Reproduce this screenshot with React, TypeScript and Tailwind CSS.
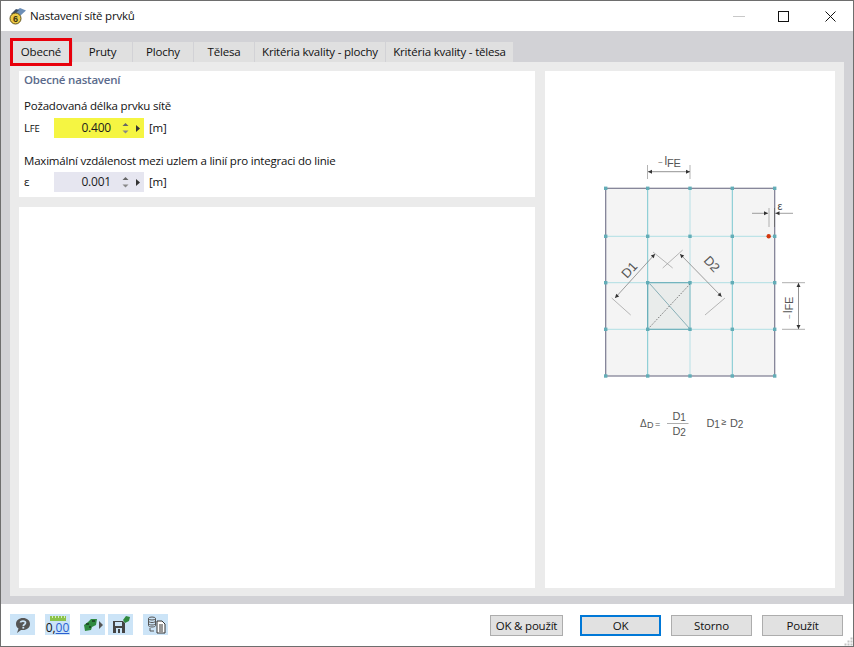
const font = { fontFamily: '"Open Sans", "Noto Sans", sans-serif' };

const tabs = [
  { label: "Pruty", w: "w-[60px]" },
  { label: "Plochy", w: "w-[61px]" },
  { label: "Tělesa", w: "w-[61px]" },
  { label: "Kritéria kvality - plochy", w: "w-[131px]" },
  { label: "Kritéria kvality - tělesa", w: "w-[128px]" },
];

const gridX = [605.7, 647.7, 690, 732.3, 774.7];
const gridY = [188.3, 236.3, 282.7, 329.3, 376];

const Arrow = ({ x, y, rot }: { x: number; y: number; rot: number }) => (
  <path d="M0 0 L-4 -2 L-4 2 Z" fill="#333" transform={`translate(${x} ${y}) rotate(${rot})`} />
);

const Diagram = () => (
  <svg viewBox="545 71 290 517" className="w-[290px] h-[517px] block">
    <rect x={605.7} y={188.3} width={169} height={187.7} fill="#f4f4f4" />
    <rect x={647.7} y={282.7} width={42.3} height={46.6} fill="#e9eceb" />
    {/* grid */}
    <line x1={647.7} x2={647.7} y1={188} y2={376} stroke="#6cc2cc" strokeWidth={0.9} />
    <line x1={690} x2={690} y1={188} y2={376} stroke="#c9e6ea" strokeWidth={1.4} />
    <line x1={732.3} x2={732.3} y1={188} y2={376} stroke="#6cc2cc" strokeWidth={0.9} />
    <line x1={606} x2={775} y1={236.3} y2={236.3} stroke="#a8dce2" strokeWidth={0.9} />
    <line x1={606} x2={775} y1={282.7} y2={282.7} stroke="#a8dce2" strokeWidth={0.9} />
    <line x1={606} x2={775} y1={329.3} y2={329.3} stroke="#a8dce2" strokeWidth={0.9} />
    {/* highlighted element */}
    <path d="M647.7 282.7 H690 M647.7 329.3 H690 M647.7 282.7 V329.3" stroke="#62a9b5" strokeWidth={1} fill="none" />
    <line x1={690} x2={690} y1={282.7} y2={329.3} stroke="#9cc9cf" strokeWidth={1.4} />
    <line x1={650} y1={284} x2={690} y2={329} stroke="#5f95a0" strokeWidth={0.7} />
    <line x1={648} y1={329} x2={690} y2={284} stroke="#555" strokeWidth={0.8} strokeDasharray="1.5 1.5" />
    <rect x={605.7} y={188.3} width={169} height={187.7} fill="none" stroke="#7a7a90" strokeWidth={1.2} />
    {gridX.map((x) =>
      gridY.map((y) => <rect key={`${x}-${y}`} x={x - 1.7} y={y - 1.7} width={3.4} height={3.4} fill="#63adb7" />)
    )}
    <circle cx={768.7} cy={236.3} r={2.2} fill="#d4380d" />
    {/* l FE dimension, top */}
    <path d="M647.5 165 V179 M690 165 V179" stroke="#aaa" strokeWidth={0.9} />
    <line x1={648} x2={690} y1={171.7} y2={171.7} stroke="#666" strokeWidth={0.7} />
    <Arrow x={648} y={171.7} rot={180} />
    <Arrow x={690} y={171.7} rot={0} />
    <g fill="#555" fontFamily="Liberation Sans">
      <text x={658} y={165} fontSize={8}>~</text>
      <text x={664.5} y={165} fontSize={12}>l</text>
      <text x={667} y={166.5} fontSize={11}>FE</text>
    </g>
    {/* epsilon */}
    <path d="M752 213.3 H768 M775 213.3 H793" stroke="#777" strokeWidth={0.7} />
    <line x1={769} x2={769} y1={208} y2={227} stroke="#bbb" strokeWidth={1.2} />
    <line x1={774.5} x2={774.5} y1={208} y2={227} stroke="#666" strokeWidth={0.8} />
    <Arrow x={768} y={213.3} rot={0} />
    <Arrow x={775.5} y={213.3} rot={180} />
    <text x={777.5} y={210} fontSize={11} fill="#444" fontFamily="Liberation Sans">ε</text>
    {/* l FE dimension, right */}
    <path d="M782 282.7 H805 M782 329.3 H805" stroke="#999" strokeWidth={0.8} />
    <line x1={798.5} x2={798.5} y1={283} y2={329} stroke="#666" strokeWidth={0.7} />
    <Arrow x={798.5} y={283} rot={-90} />
    <Arrow x={798.5} y={329} rot={90} />
    <g fill="#555" fontFamily="Liberation Sans" transform="translate(792.7 319) rotate(-90)">
      <text x={0} y={-1} fontSize={8}>~</text>
      <text x={6} y={-1} fontSize={12}>l</text>
      <text x={8.5} y={0} fontSize={11}>FE</text>
    </g>
    {/* D1 / D2 */}
    <line x1={615} y1={298} x2={655} y2={254} stroke="#777" strokeWidth={0.7} />
    <Arrow x={655} y={254} rot={-47} />
    <Arrow x={615} y={298} rot={133} />
    <line x1={680} y1={254} x2={721.7} y2={296.7} stroke="#777" strokeWidth={0.7} />
    <Arrow x={680} y={254} rot={-134} />
    <Arrow x={721.7} y={296.7} rot={46} />
    <path d="M611.7 298 L630.7 315 M653 252 L672.7 268 M682.7 250 L662.7 268 M725 298 L705 315" stroke="#999" strokeWidth={0.7} fill="none" />
    <text x={0} y={0} fontSize={13} fill="#555" fontFamily="Liberation Sans" transform="translate(627 279) rotate(-47)">D1</text>
    <text x={0} y={0} fontSize={13} fill="#555" fontFamily="Liberation Sans" transform="translate(703 261) rotate(47)">D2</text>
    {/* formula */}
    <g fontFamily="Liberation Sans" fill="#555">
      <text x={640} y={427} fontSize={10}>Δ</text>
      <text x={647} y={428} fontSize={9}>D</text>
      <text x={655} y={427} fontSize={9}>=</text>
      <line x1={667} x2={688.5} y1={423.5} y2={423.5} stroke="#999" strokeWidth={0.8} />
      <text x={672.5} y={420} fontSize={11}>D<tspan fontSize={10} dy={1}>1</tspan></text>
      <text x={672.5} y={435} fontSize={11}>D<tspan fontSize={10} dy={1}>2</tspan></text>
      <text x={706.5} y={427} fontSize={11}>D<tspan fontSize={10} dy={1}>1</tspan></text>
      <text x={721.5} y={425} fontSize={9}>≥</text>
      <text x={730} y={427} fontSize={11}>D<tspan fontSize={10} dy={1}>2</tspan></text>
    </g>
  </svg>
);

const Spinner = () => (
  <svg width="30" height="20" viewBox="0 0 30 20" className="shrink-0">
    <path d="M13.5 5 L10.5 8 H16.5 Z" fill="#666" />
    <path d="M10.5 12.5 H16.5 L13.5 15.5 Z" fill="#888" />
    <path d="M24 7 L28 10.5 L24 14 Z" fill="#333" />
  </svg>
);

const ValueField = ({ value, bg }: { value: string; bg: string }) => (
  <div className={`w-[90px] h-5 flex items-center justify-end pr-[2px] ${bg}`}>
    <span className="text-[12px] text-[#1c1c1c] mr-px leading-none">{value}</span>
    <Spinner />
  </div>
);

const ToolButton = ({ children, className }: { children: React.ReactNode; className?: string }) => (
  <div className={`w-[25px] h-[21px] -mt-[2px] bg-[#cce4f7] flex items-center justify-center ${className ?? ""}`}>{children}</div>
);

const FooterButton = ({ label, className }: { label: string; className: string }) => (
  <div className={`h-[21px] bg-[#e1e1e1] flex items-center justify-center text-[#111] ${className}`}>{label}</div>
);

const AppIcon = () => (
  <svg width="17" height="18" viewBox="0 0 17 18">
    <path d="M5 5 L11 1 L17 3.5 L11 9 Z" fill="#6d8fb8" />
    <path d="M2 7 L7 2 L10 3 L5 8 Z" fill="#3f4f66" />
    <circle cx="6.5" cy="11.5" r="5.5" fill="#ecca45" stroke="#5d5120" strokeWidth="1" />
    <text x="4" y="15" fontSize="9" fontWeight="bold" fill="#3a3310" fontFamily="Liberation Sans">6</text>
  </svg>
);

export default function App() {
  return (
    <div style={font} className="w-[854px] h-[647px] bg-white border border-[#6e6e6e] flex flex-col overflow-hidden text-[11.5px] tracking-[-0.2px] text-[#111]">
      {/* title bar */}
      <div className="h-[30px] shrink-0 flex items-center pl-[8px]">
        <AppIcon />
        <span className="ml-[4px] text-[#111]">Nastavení sítě prvků</span>
        <div className="ml-auto flex items-center">
          <div className="w-[12px] h-px bg-[#c8c8c8] mr-[33px]" />
          <div className="w-[11px] h-[11px] border border-[#111] mr-[36px]" />
          <svg width="11" height="11" viewBox="0 0 11 11" className="mr-[17px]">
            <path d="M0.5 0.5 L10.5 10.5 M10.5 0.5 L0.5 10.5" stroke="#111" strokeWidth="1" />
          </svg>
        </div>
      </div>

      {/* body */}
      <div className="h-[573px] shrink-0 bg-[#d2d2d6] px-[9px] pb-[8px] flex flex-col">
        <div className="h-[31px] shrink-0 flex items-end">
          <div className="relative z-10 w-[62px] h-[28px] -mb-[4px] mr-px border-[3px] border-[#e8000b] bg-[#e0e0e0] flex items-center justify-center">
            Obecné
          </div>
          {tabs.map((t) => (
            <div key={t.label} className={`${t.w} h-[20px] bg-[#e0e0e0] border-r border-[#d2d2d6] flex items-center justify-center`}>
              {t.label}
            </div>
          ))}
        </div>

        <div className="flex-1 bg-[#ebebeb] p-[9px] pb-[8px] flex gap-[10px]">
          <div className="w-[516px] flex flex-col gap-[10px]">
            <div className="h-[126px] bg-white px-[5px] pt-px">
              <div className="h-[15px] leading-[15px] font-semibold text-[#5b6b8c]">Obecné nastavení</div>
              <div className="mt-[11px] h-[16px] leading-[16px]">Požadovaná délka prvku sítě</div>
              <div className="mt-[4px] flex items-center">
                <span className="w-[30px]">L<span className="text-[9.5px]">FE</span></span>
                <ValueField value="0.400" bg="bg-[#f5f542]" />
                <span className="ml-[5px]">[m]</span>
              </div>
              <div className="mt-[15px] h-[16px] leading-[16px]">Maximální vzdálenost mezi uzlem a linií pro integraci do linie</div>
              <div className="mt-[3px] flex items-center">
                <span className="w-[30px]">ε</span>
                <ValueField value="0.001" bg="bg-[#e6e6f0]" />
                <span className="ml-[5px]">[m]</span>
              </div>
            </div>
            <div className="flex-1 bg-white" />
          </div>
          <div className="w-[290px] bg-white">
            <Diagram />
          </div>
        </div>
      </div>

      {/* footer */}
      <div className="relative flex-1 flex items-center pl-[9px] pr-[10px] pt-px">
        <ToolButton className="mr-[10px]">
          <svg width="18" height="18" viewBox="0 0 18 18">
            <path d="M9 2 C13 2 16 4.5 16 8 C16 11.5 13 14 9 14 L7 14 L3 17 L4.5 12.5 C3 11.5 2 10 2 8 C2 4.5 5 2 9 2 Z" fill="#555" />
            <path d="M6.5 6.5 C6.5 4.5 11.5 4.5 11.5 6.8 C11.5 8.5 9.3 8.5 9.3 10" stroke="#cce4f7" strokeWidth="1.7" fill="none" />
            <rect x="8.4" y="10.8" width="1.8" height="1.8" fill="#cce4f7" />
          </svg>
        </ToolButton>
        <ToolButton className="mr-[10px] flex-col">
          <svg width="16" height="5" viewBox="0 0 16 5" className="block">
            <rect width="16" height="5" fill="#8bc34a" />
            <path d="M2.5 0 V2 M5.5 0 V2 M8.5 0 V2 M11.5 0 V2 M14.5 0 V2" stroke="#d8ecc0" />
          </svg>
          <div className="text-[12px] leading-[13px] tracking-normal text-[#111]">
            0,<span className="text-[#2a5fd0] underline">00</span>
          </div>
        </ToolButton>
        <ToolButton className="mr-[3px]">
          <svg width="20" height="16" viewBox="0 0 20 16">
            <path d="M1 8 L5 5 L8 2 L14 2 L13 8 L9 10 L8 13 L2 14 Z" fill="#2f8a3f" />
            <path d="M3 7 H6 M6 10 H8 M9 4 H12" stroke="#111" strokeWidth="1.2" />
            <path d="M16 4 L20 8 L16 12 Z" fill="#555" />
          </svg>
        </ToolButton>
        <ToolButton className="mr-[10px]">
          <svg width="20" height="19" viewBox="0 0 20 19">
            <path d="M2 6 H12 L14 8 V18 H2 Z" fill="#444" />
            <rect x="4" y="7" width="7" height="4" fill="#cce4f7" />
            <rect x="5" y="13" width="6" height="5" fill="#cce4f7" />
            <rect x="7" y="14" width="2" height="4" fill="#444" />
            <path d="M12 5 L15 1 L19 2 L18 6 L14 8 Z" fill="#2f8a3f" />
          </svg>
        </ToolButton>
        <ToolButton>
          <svg width="20" height="20" viewBox="0 0 20 20" fill="none">
            <ellipse cx="6" cy="3.5" rx="3.5" ry="1.5" stroke="#555" />
            <path d="M2.5 3.5 V10.5 C2.5 12.5 9.5 12.5 9.5 10.5 V3.5 M2.5 6 C2.5 8 9.5 8 9.5 6 M2.5 8.5 C2.5 10.5 9.5 10.5 9.5 8.5" stroke="#555" />
            <path d="M4 13 V16 H8" stroke="#555" />
            <path d="M11 6 H16 L19 9 V18 H11 Z" fill="#fff" stroke="#333" />
            <path d="M13 10 H17 M13 12 H17 M13 14 H17 M13 16 H17" stroke="#333" />
          </svg>
        </ToolButton>

        <FooterButton label="OK & použít" className="ml-auto w-[73px] border border-[#adadad] mr-[17px]" />
        <FooterButton label="OK" className="w-[81px] border-2 border-[#0078d7] mr-[10px]" />
        <FooterButton label="Storno" className="w-[81px] border border-[#adadad] mr-[10px]" />
        <FooterButton label="Použít" className="w-[81px] border border-[#adadad]" />

        {/* resize grip */}
        <svg width="9" height="9" viewBox="0 0 9 9" className="absolute right-0 bottom-0">
          <path d="M6.5 0.5 h2 v2 h-2z M3.5 3.5 h2 v2 h-2z M6.5 3.5 h2 v2 h-2z M0.5 6.5 h2 v2 h-2z M3.5 6.5 h2 v2 h-2z M6.5 6.5 h2 v2 h-2z" fill="#c4c4c4" />
        </svg>
      </div>
    </div>
  );
}
